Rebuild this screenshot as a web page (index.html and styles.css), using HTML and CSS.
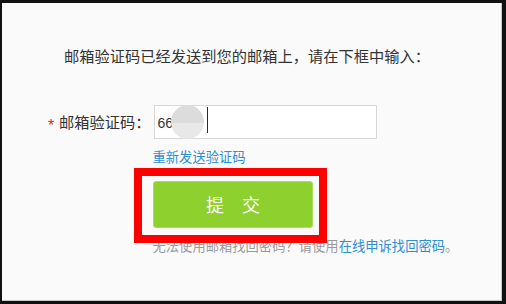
FILE: index.html
```html
<!DOCTYPE html>
<html lang="zh-CN">
<head>
<meta charset="utf-8">
<title>邮箱验证</title>
<link rel="stylesheet" href="styles.css">
</head>
<body>
<div class="frame">
  <div class="panel">
    <p class="intro">邮箱验证码已经发送到您的邮箱上，请在下框中输入：</p>
    <div class="form-row">
      <span class="star">*</span>
      <span class="label">邮箱验证码：</span>
      <div class="field">
        <span class="value">66</span>
        <span class="redact"></span>
        <span class="caret"></span>
      </div>
    </div>
    <a class="resend">重新发送验证码</a>
    <div class="submit">提　交</div>
    <p class="help">无法使用邮箱找回密码？请使用<a class="help-link">在线申诉找回密码</a>。</p>
    <div class="highlight"></div>
  </div>
</div>
</body>
</html>
```
FILE: styles.css
```css
html, body {
  margin: 0;
  padding: 0;
}
body {
  background: #111;
  font-family: "Noto Sans CJK SC", "Microsoft YaHei", sans-serif;
  width: 506px;
  height: 304px;
  overflow: hidden;
}
.frame {
  width: 506px;
  height: 304px;
  box-sizing: border-box;
  padding: 3px 4px 3px 2px;
}
.panel {
  position: relative;
  height: 100%;
  box-sizing: border-box;
  background: #fafafa;
  border-right: 1px solid #c9c9c9;
  border-bottom: 1px solid #c9c9c9;
  padding-top: 42px;
}
.intro {
  margin: 0;
  padding-left: 62px;
  font-size: 15.25px;
  line-height: 21px;
  color: #333;
  white-space: nowrap;
}
.form-row {
  display: flex;
  align-items: center;
  margin-top: 39px;
  padding-left: 46px;
}
.star {
  width: 11px;
  font-family: "Liberation Sans", Arial, sans-serif;
  font-size: 16px;
  line-height: 16px;
  color: #e8231f;
  margin-top: 8px;
}
.label {
  font-size: 15.25px;
  line-height: 20px;
  color: #333;
  margin-right: 3px;
  margin-top: -3px;
}
.field {
  position: relative;
  width: 223px;
  height: 34px;
  box-sizing: border-box;
  border: 1px solid #d8d8d8;
  background: #fff;
  padding-left: 3px;
  display: flex;
  align-items: center;
  font-family: "Liberation Sans", Arial, sans-serif;
  font-size: 14px;
  color: #333;
}
.value {
  line-height: 16px;
  margin-top: 1px;
}
.redact {
  position: absolute;
  left: 16px;
  top: -1px;
  width: 33px;
  height: 34px;
  border-radius: 50%;
  background: linear-gradient(#dcdcdc 0, #dcdcdc 52%, #e8e8e8 52%, #e8e8e8 100%);
}
.caret {
  position: absolute;
  left: 52px;
  top: 1px;
  width: 1.5px;
  height: 26px;
  background: #2a2a2a;
}
.resend {
  display: block;
  margin-top: 9px;
  padding-left: 150.5px;
  font-size: 13.3px;
  line-height: 18px;
  color: #2d8fd5;
}
.submit {
  margin-top: 15px;
  margin-left: 151px;
  width: 160px;
  height: 47px;
  box-sizing: border-box;
  border: 1px solid #a9dc66;
  border-radius: 3px;
  background: #8ed12f;
  color: #fff;
  font-size: 18px;
  line-height: 45px;
  text-align: center;
}
.help {
  margin: 8.5px 0 0;
  padding-left: 150.5px;
  font-size: 13.3px;
  line-height: 18px;
  color: #9a9a9a;
  white-space: nowrap;
}
.help-link {
  color: #2d8fd5;
}
.highlight {
  position: absolute;
  left: 132px;
  top: 165px;
  width: 193px;
  height: 75px;
  box-sizing: border-box;
  border: 8px solid #ff0000;
}
```
